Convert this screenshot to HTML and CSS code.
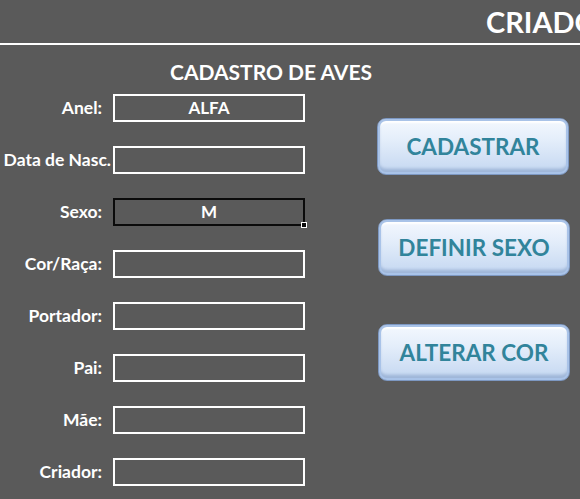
FILE: index.html
```html
<!DOCTYPE html>
<html lang="pt">
<head>
<meta charset="utf-8">
<title>Cadastro de Aves</title>
<link rel="stylesheet" href="styles.css">
</head>
<body>
<div class="page">
  <header class="topbar">
    <div class="brand">CRIADOR</div>
  </header>
  <div class="rule"></div>
  <h1 class="title">CADASTRO DE AVES</h1>
  <div class="content">
    <div class="form">
      <div class="label">Anel:</div><div class="cell">ALFA</div>
      <div class="label"><span class="wide">Data de Nasc.</span></div><div class="cell"></div>
      <div class="label">Sexo:</div><div class="cell selected">M<span class="handle"></span></div>
      <div class="label">Cor/Raça:</div><div class="cell"></div>
      <div class="label">Portador:</div><div class="cell"></div>
      <div class="label">Pai:</div><div class="cell"></div>
      <div class="label">Mãe:</div><div class="cell"></div>
      <div class="label">Criador:</div><div class="cell"></div>
    </div>
    <div class="actions">
      <button class="btn btn-1">CADASTRAR</button>
      <button class="btn btn-2">DEFINIR SEXO</button>
      <button class="btn btn-3">ALTERAR COR</button>
    </div>
  </div>
</div>
</body>
</html>
```

FILE: styles.css
```css
html, body {
  margin: 0;
  padding: 0;
  background: #5a5a5a;
}
body {
  width: 580px;
  height: 499px;
  overflow: hidden;
  font-family: Lato, "Open Sans", "Liberation Sans", sans-serif;
  font-weight: 700;
  color: #ffffff;
}
.page {
  width: 580px;
  height: 499px;
  overflow: hidden;
}
.topbar {
  height: 43px;
  padding-left: 486px;
  box-sizing: border-box;
  white-space: nowrap;
  overflow: hidden;
}
.brand {
  font-size: 29px;
  line-height: 43px;
}
.rule {
  height: 2px;
  background: #ffffff;
}
.title {
  margin: 0;
  padding-left: 170px;
  padding-top: 14px;
  font-size: 21px;
  line-height: 25px;
  font-weight: 700;
  height: 49px;
  box-sizing: border-box;
  white-space: nowrap;
}
.content {
  display: flex;
  align-items: flex-start;
}
.form {
  display: grid;
  grid-template-columns: 102px 192px;
  grid-auto-rows: 28px;
  column-gap: 11px;
  row-gap: 24px;
}
.label {
  display: flex;
  justify-content: flex-end;
  font-size: 17.5px;
  line-height: 28px;
  white-space: nowrap;
}
.wide {
  margin-right: -9px;
}
.cell {
  position: relative;
  border: 2px solid #ffffff;
  box-sizing: border-box;
  text-align: center;
  font-size: 17px;
  line-height: 24px;
}
.cell.selected {
  border-color: #0b0b0b;
}
.handle {
  position: absolute;
  right: -4px;
  bottom: -4px;
  width: 4px;
  height: 4px;
  background: #0b0b0b;
  border: 1px solid #ffffff;
}
.actions {
  display: flex;
  flex-direction: column;
  margin-left: 72px;
  margin-top: 24px;
}
.btn {
  width: 192px;
  height: 57px;
  padding: 0;
  font-family: inherit;
  font-weight: 700;
  font-size: 22.5px;
  color: #31849b;
  border: 1px solid #7d98c2;
  border-radius: 9px;
  background: linear-gradient(180deg, #f4f8fe 0%, #e3edfa 40%, #cbdcf3 85%, #b5c9e6 100%);
  box-shadow: inset 0 0 0 2px #a9c3e8, inset 0 -4px 3px 1px #9fb6d8, inset 0 3px 2px 1px #ffffff;
  cursor: pointer;
}
.btn-2 {
  margin-top: 44px;
  margin-left: 1px;
}
.btn-3 {
  margin-top: 48px;
  margin-left: 1px;
}
```
